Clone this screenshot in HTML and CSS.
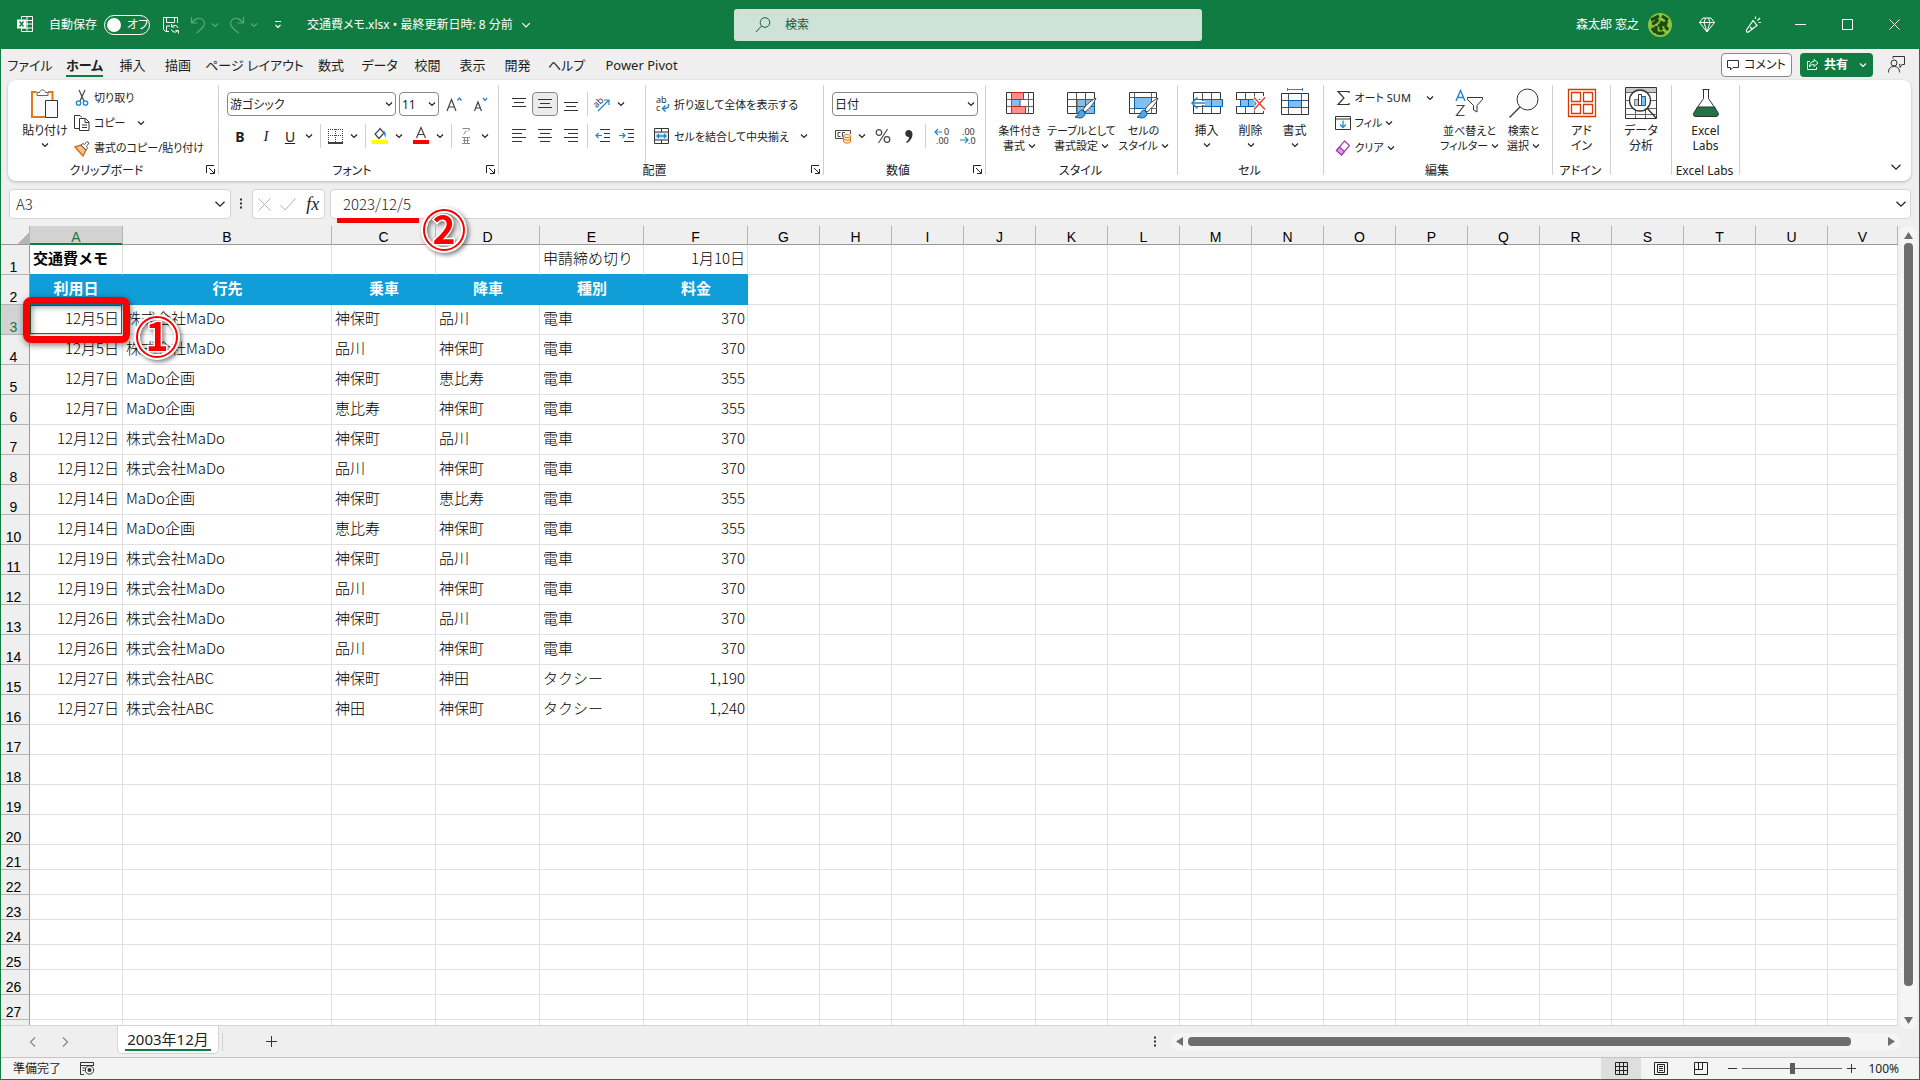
FILE: index.html
```html
<!DOCTYPE html>
<html lang="ja">
  <head>
    <meta charset="UTF-8" />
    <meta name="viewport" content="width=device-width, initial-scale=1.0" />
    <title>交通費メモ.xlsx - Excel</title>
    <link rel="stylesheet" href="styles.css">
  </head>
  <body>
    <svg class="sprite" aria-hidden="true">
      <symbol id="chev" viewBox="0 0 8 8"><path class="chev-line" d="M1 2.500l3 3 3-3" /></symbol>
      <symbol id="launch" viewBox="0 0 9 9"><path d="M.5 8V.5H8M3 3l5 5M8.500 4v4.500H4" fill="none" stroke="currentColor" /></symbol>
      <symbol id="brush" viewBox="0 0 22 22"><path d="M21 1C15 4 10 9 8 13l2 2c4-3 9-8 11-14z" fill="#fff" stroke="#444" /><path d="M7 13c-3 0-3 3-4 5l-3 2c5 2 10 1 10-4z" fill="#5ba3dd" stroke="#0063b1" /></symbol>
    </svg>

    <header class="titlebar">
      <svg class="excel-logo" width="16" height="17" viewBox="0 0 16 17"><path d="M4.500 3V.5h11v15h-11V13M10 .5v15M4.500 4.500h11M9 8h6.500M4.500 12h11" fill="none" stroke="#fff" /><path d="M0 3.500h9v9H0z" fill="#fff" /><path d="M2.500 5.500l4 5M6.500 5.500l-4 5" stroke="#107c41" stroke-width="1.400" /></svg>
      <label class="autosave" for="autosave">自動保存</label>
      <label class="toggle"><input type="checkbox" id="autosave" /><span>オフ</span></label>
      <button class="tb-btn" aria-label="保存"><svg width="18" height="18" viewBox="0 0 18 18"><path d="M7 15.500H3.500L1.500 13.500v-12h14V7M4.500 1.500v5h8v-5M4.500 15v-5H8" fill="none" stroke="#fff" /><path d="M16 12a3.500 3.500 0 0 0-6-1.500M9.500 8v3h3M9.500 13.500a3.500 3.500 0 0 0 6 1.500M16.500 17.500v-3h-3" fill="none" stroke="#fff" /></svg></button>
      <button class="tb-btn dim undo" aria-label="元に戻す"><svg width="16" height="18" viewBox="0 0 16 18"><path d="M1.500 1v6h6M1.500 7C6 1.500 11 1 13.500 4.500s1 6-7 12.500" fill="none" stroke="currentColor" stroke-width="1.200" /></svg><svg width="8" height="8"><use href="#chev" /></svg></button>
      <button class="tb-btn dim" aria-label="やり直し"><svg width="16" height="18" viewBox="0 0 16 18"><path d="M14.500 1v6h-6M14.500 7C10 1.500 5 1 2.500 4.500s-1 6 7 12.500" fill="none" stroke="currentColor" stroke-width="1.200" /></svg><svg width="8" height="8"><use href="#chev" /></svg></button>
      <button class="tb-btn custom" aria-label="クイック アクセス"><svg width="8" height="8" viewBox="0 0 8 8"><path d="M1 .5h6M1.500 4L4 6.500 6.500 4" fill="none" stroke="#fff" stroke-width="1.200" /></svg></button>
      <button class="doc-title">交通費メモ.xlsx • 最終更新日時: 8 分前 <svg width="10" height="10"><use href="#chev" /></svg></button>
      <div class="search">
        <svg width="16" height="16" viewBox="0 0 16 16"><circle cx="10" cy="5.500" r="4.800" fill="none" stroke="#185c37" /><path d="M6.500 9L1 15" stroke="#185c37" /></svg>
        <input type="text" placeholder="検索" aria-label="検索" />
      </div>
      <div class="title-right">
        <span class="user">森太郎 窓之</span>
        <svg class="avatar" width="24" height="24" viewBox="0 0 24 24"><circle cx="12" cy="12" r="12" fill="#8cc63f" /><path d="M3 7l8-4M14 3l6 4M4 11c4-1 5-3 6-5M12 9l7 3M19 8c-2 4-6 5-9 4M4 15l3 4M8 13v5c1 3 6 3 8 1M12 14l2 3M17 13l3 4" fill="none" stroke="#1f4a12" stroke-width="3.200" /></svg>
        <button class="tb-win" aria-label="プレミアム"><svg width="16" height="16" viewBox="0 0 16 16"><path d="M4 1h8l3.500 4.500L8 15 .5 5.500zM.5 5.500h15M5 5.500L8 15l3-9.500M5 5.500L6.500 1M11 5.500L9.500 1" fill="none" stroke="#fff" /></svg></button>
        <button class="tb-win" aria-label="ペン"><svg width="17" height="17" viewBox="0 0 17 17"><path d="M8 4.500L1.500 14c-.5 1.500.5 2.500 2 2L12 9.500zM5 11l2.500 2.500M10.500 3V.5M12.500 4.500L15 2M13.500 6.500H16" fill="none" stroke="#fff" stroke-width="1.200" /></svg></button>
        <button class="tb-win" aria-label="最小化"><svg width="11" height="11"><path d="M0 5.500h11" stroke="#fff" /></svg></button>
        <button class="tb-win" aria-label="最大化"><svg width="11" height="11"><path d="M.5 .5h10v10H.5z" fill="none" stroke="#fff" /></svg></button>
        <button class="tb-win" aria-label="閉じる"><svg width="11" height="11"><path d="M.5 .5l10 10M10.500 .5l-10 10" stroke="#fff" /></svg></button>
      </div>
    </header>

    <nav class="tabs">
      <div class="tab-list">
        <a href="#">ファイル</a>
        <a href="#" class="active"><span>ホーム</span></a>
        <a href="#">挿入</a>
        <a href="#">描画</a>
        <a href="#">ページ レイアウト</a>
        <a href="#">数式</a>
        <a href="#">データ</a>
        <a href="#">校閲</a>
        <a href="#">表示</a>
        <a href="#">開発</a>
        <a href="#">ヘルプ</a>
        <a href="#">Power Pivot</a>
      </div>
      <div class="tab-actions">
        <button class="comment"><svg width="12" height="12" viewBox="0 0 12 12"><path d="M.5 1.500h11v7H6L3.500 11V8.500h-3z" fill="none" stroke="#333" /></svg>コメント</button>
        <button class="share"><svg width="13" height="13" viewBox="0 0 13 13"><path d="M4 3.500H1.500v8h9V9M8 1.500l4 3.500-4 3.500V6.500C6 6.500 4.500 7 3.500 9 3.500 6 5 3.500 8 3.500z" fill="none" stroke="#fff" /></svg>共有<svg width="8" height="8"><use href="#chev" /></svg></button>
        <button class="presence" aria-label="ユーザー"><svg width="17" height="17" viewBox="0 0 17 17"><path d="M5 2.500V.5h11.500v8H14l-2 3V8.500h-1" fill="none" stroke="#333" /><circle cx="6" cy="7" r="3" fill="none" stroke="#333" /><path d="M.5 16.500c0-4 2-6 5.500-6s5.500 2 5.500 6" fill="none" stroke="#333" /></svg></button>
      </div>
    </nav>

    <main class="ribbon">
      <section class="group clipboard">
        <div class="group-body">
          <button class="big">
            <span class="pic"><svg width="28" height="30" viewBox="0 0 28 30"><path d="M5.500 4H1v25h13M17 4h4.500v8" fill="none" stroke="#e07b1a" stroke-width="2" /><path d="M3 5h17v8h-6v14H3z" fill="#fafafa" /><path d="M6 7.500V4.500h2.500C9 1 14 1 14.500 4.500H17v3z" fill="#fff" stroke="#666" /><path d="M14.500 12.500h12v17h-12z" fill="#fafafa" stroke="#333" /></svg></span>
            <span>貼り付け</span>
            <svg width="8" height="14"><use href="#chev" /></svg>
          </button>
          <div class="list">
            <button class="item"><svg width="18" height="18" viewBox="0 0 18 18"><path d="M6 1l5 11M12 1L7 12" stroke="#444" stroke-width="1.200" /><circle cx="5.500" cy="14" r="2.200" fill="none" stroke="#1e88d0" stroke-width="1.300" /><circle cx="12.500" cy="14" r="2.200" fill="none" stroke="#1e88d0" stroke-width="1.300" /></svg>切り取り</button>
            <button class="item copy"><svg width="18" height="18" viewBox="0 0 18 18"><path d="M6 14.500H1.500v-13H7l2 2M6.500 4.500h6l3.500 3.500v8.500H6.500zM12 4.500V8.500h4M9 11h5M9 13.500h5" fill="none" stroke="#333" /></svg>コピー<svg width="8" height="8"><use href="#chev" /></svg></button>
            <button class="item"><svg width="18" height="18" viewBox="0 0 18 18"><path d="M2 8l6-2 5 5-3 6z" fill="#f6c08b" stroke="#d8701a" stroke-width="1.400" /><path d="M4 11l4 3" stroke="#d8701a" /><path d="M8 6l2-1.500 1.500 1L14 2.500l2 1.500-2.500 3.500 1 1.500-1.500 2z" fill="#fff" stroke="#555" /></svg>書式のコピー/貼り付け</button>
          </div>
        </div>
        <div class="group-label"><span>クリップボード</span><button class="launcher" aria-label="詳細"><svg width="9" height="9"><use href="#launch" /></svg></button></div>
      </section>

      <section class="group font">
        <div class="group-body rows">
          <div class="row">
            <span class="pick family"><select aria-label="フォント"><option>游ゴシック</option></select><svg width="8" height="8"><use href="#chev" /></svg></span>
            <span class="pick size"><select aria-label="フォント サイズ"><option>11</option></select><svg width="8" height="8"><use href="#chev" /></svg></span>
            <button class="ib" aria-label="拡大"><svg width="17" height="17" viewBox="0 0 17 17"><path d="M1 15L5.500 3.500 10 15M2.800 11h5.500" fill="none" stroke="#444" stroke-width="1.200" /><path d="M11.500 4.500l2-2.500 2 2.500" fill="none" stroke="#1e88d0" stroke-width="1.300" /></svg></button>
            <button class="ib" aria-label="縮小"><svg width="17" height="17" viewBox="0 0 17 17"><path d="M2.500 15L6 6 9.500 15M4 12h4" fill="none" stroke="#444" stroke-width="1.200" /><path d="M11 2l2 2.500L15 2" fill="none" stroke="#1e88d0" stroke-width="1.300" /></svg></button>
          </div>
          <div class="row">
            <button class="ib bold">B</button>
            <button class="ib italic">I</button>
            <button class="ib split underline">U</button><button class="drop" aria-label="下線"><svg width="8" height="8"><use href="#chev" /></svg></button>
            <i class="vsep"></i>
            <button class="ib split" aria-label="罫線"><svg width="15" height="16" viewBox="0 0 15 16"><path d="M.5 1v13M14.500 1v13M7.500 1v13M0 1.500h15M0 7.500h15" stroke="#444" stroke-dasharray="1 1" /><path d="M0 15h15" stroke="#000" stroke-width="1.500" /></svg></button><button class="drop" aria-label="罫線の種類"><svg width="8" height="8"><use href="#chev" /></svg></button>
            <i class="vsep"></i>
            <button class="ib split" aria-label="塗りつぶし"><svg width="16" height="18" viewBox="0 0 16 18"><path d="M7.500 1l4.500 5-5 5.500-4-4.500 5-5" fill="none" stroke="#444" stroke-width="1.200" /><path d="M11 4c3 0 3 3 2.500 7-1-2-1-4-2.500-5" fill="#1e88d0" /><path d="M0 13h16v4H0z" fill="#ff0" /></svg></button><button class="drop" aria-label="塗りつぶしの色"><svg width="8" height="8"><use href="#chev" /></svg></button>
            <button class="ib split gap" aria-label="フォントの色"><svg width="16" height="18" viewBox="0 0 16 18"><path d="M3.500 11L8 .5l4.500 10.500M5 7.500h6" fill="none" stroke="#444" stroke-width="1.200" /><path d="M0 13h16v4H0z" fill="#f00" /></svg></button><button class="drop" aria-label="色"><svg width="8" height="8"><use href="#chev" /></svg></button>
            <i class="vsep"></i>
            <button class="ib split" aria-label="ふりがな"><svg width="10" height="18" viewBox="0 0 10 18"><path d="M1.500 1.500h7c0 1.500-1 2.500-2 3M4.500 3.500c0 2-1 3.500-2 4M1 10.500h8M1 16.500h8M2 13.500h6M3.500 10.500v6M6.500 10.500v6" fill="none" stroke="#888" /></svg></button><button class="drop" aria-label="ふりがなの設定"><svg width="8" height="8"><use href="#chev" /></svg></button>
          </div>
        </div>
        <div class="group-label"><span>フォント</span><button class="launcher" aria-label="詳細"><svg width="9" height="9"><use href="#launch" /></svg></button></div>
      </section>

      <section class="group align">
        <div class="group-body">
          <div class="rows align-left">
            <div class="row">
              <button class="ib" aria-label="上揃え"><svg width="14" height="14"><path d="M0 1.500h14M2 5.500h10M0 9.500h14" stroke="#333" /></svg></button>
              <button class="ib on" aria-label="上下中央揃え"><svg width="14" height="14"><path d="M0 2.500h14M2 6.500h10M0 10.500h14" stroke="#333" /></svg></button>
              <button class="ib" aria-label="下揃え"><svg width="14" height="14"><path d="M0 5.500h14M2 9.500h10M0 13.500h14" stroke="#333" /></svg></button>
              <i class="vsep"></i>
              <button class="ib split" aria-label="方向"><svg width="18" height="16" viewBox="0 0 18 16"><path d="M5 15L15.500 4.500M11 4h5v5" fill="none" stroke="#1e88d0" stroke-width="1.200" /><text x="1" y="10" transform="rotate(-45 5 8)" class="ab">ab</text></svg></button><button class="drop" aria-label="方向の種類"><svg width="8" height="8"><use href="#chev" /></svg></button>
            </div>
            <div class="row">
              <button class="ib" aria-label="左揃え"><svg width="14" height="14"><path d="M0 .5h14M0 4.500h10M0 8.500h14M0 12.500h10" stroke="#333" /></svg></button>
              <button class="ib" aria-label="中央揃え"><svg width="14" height="14"><path d="M0 .5h14M2 4.500h10M0 8.500h14M2 12.500h10" stroke="#333" /></svg></button>
              <button class="ib" aria-label="右揃え"><svg width="14" height="14"><path d="M0 .5h14M4 4.500h10M0 8.500h14M4 12.500h10" stroke="#333" /></svg></button>
              <i class="vsep"></i>
              <button class="ib split" aria-label="インデントを減らす"><svg width="15" height="14"><path d="M5 .5h10M9 4.500h6M9 8.500h6M5 12.500h10" stroke="#333" /><path d="M7 6.500H1M3.500 4L1 6.500 3.500 9" fill="none" stroke="#1e88d0" stroke-width="1.200" /></svg></button>
              <button class="ib" aria-label="インデントを増やす"><svg width="15" height="14"><path d="M5 .5h10M9 4.500h6M9 8.500h6M5 12.500h10" stroke="#333" /><path d="M0 6.500h6M3.500 4L6 6.500 3.500 9" fill="none" stroke="#1e88d0" stroke-width="1.200" /></svg></button>
            </div>
          </div>
          <div class="rows align-right">
            <button class="item"><svg width="18" height="18" viewBox="0 0 18 18"><text x="3" y="8" class="abc">ab</text><text x="3" y="16" class="abc">c</text><path d="M15.500 9v2c0 2-2 2.500-5.500 2.500M12.500 10.500L9.500 13.500l3 3" fill="none" stroke="#1e88d0" stroke-width="1.500" /></svg>折り返して全体を表示する</button>
            <button class="item"><svg width="18" height="16" viewBox="0 0 18 16"><path d="M1.500 4h14v8h-14z" fill="#dcebf7" /><path d="M1.500 .5h14v15h-14zM1.500 4h14M1.500 12h14M8.500 .5V4M8.500 12v3.500" fill="none" stroke="#333" /><path d="M4 8h9M6 6L4 8l2 2M11 6l2 2-2 2" fill="none" stroke="#1e88d0" stroke-width="1.300" /></svg>セルを結合して中央揃え<svg width="8" height="8"><use href="#chev" /></svg></button>
          </div>
        </div>
        <div class="group-label"><span>配置</span><button class="launcher" aria-label="詳細"><svg width="9" height="9"><use href="#launch" /></svg></button></div>
      </section>

      <section class="group number">
        <div class="group-body rows">
          <div class="row"><span class="pick format"><select aria-label="表示形式"><option>日付</option></select><svg width="8" height="8"><use href="#chev" /></svg></span></div>
          <div class="row">
            <button class="ib split" aria-label="通貨"><svg width="17" height="15" viewBox="0 0 17 15"><path d="M8 9.500H.5v-8h15V5M5.500 3.500H3v4h2.500M10 3.500H7.500v4H8" fill="none" stroke="#444" /><path d="M8.500 7v6c1 1.500 6 1.500 7 0V7" fill="#fbe3cd" stroke="#e07b1a" /><ellipse cx="12" cy="7" rx="3.500" ry="1.500" fill="#fff" stroke="#e07b1a" /><path d="M8.500 10c1 1.500 6 1.500 7 0" fill="none" stroke="#e07b1a" /></svg></button><button class="drop" aria-label="通貨の種類"><svg width="8" height="8"><use href="#chev" /></svg></button>
            <button class="ib" aria-label="パーセント"><svg width="16" height="16" viewBox="0 0 16 16"><circle cx="4" cy="4.500" r="2.800" fill="none" stroke="#444" stroke-width="1.200" /><circle cx="12" cy="11.500" r="2.800" fill="none" stroke="#444" stroke-width="1.200" /><path d="M12.500 1L3.500 15" stroke="#444" stroke-width="1.100" /></svg></button>
            <button class="ib" aria-label="桁区切り"><svg width="8" height="13" viewBox="0 0 8 13"><path d="M4 0c5 0 5 9-2 13l-1-1c2-1.500 3-3 3-5C-1 7-1 0 4 0z" fill="#333" /></svg></button>
            <i class="vsep"></i>
            <button class="ib" aria-label="小数点以下を増やす"><svg width="17" height="16" viewBox="0 0 17 16"><path d="M8 4H1M4 1L1 4l3 3" fill="none" stroke="#1e88d0" stroke-width="1.200" /><text x="10" y="7" class="dec">0</text><text x="2" y="16" class="dec">.00</text></svg></button>
            <button class="ib" aria-label="小数点以下を減らす"><svg width="17" height="16" viewBox="0 0 17 16"><path d="M0 12h8M5 9l3 3-3 3" fill="none" stroke="#1e88d0" stroke-width="1.200" /><text x="2" y="7" class="dec">.00</text><text x="8" y="16" class="dec">.0</text></svg></button>
          </div>
        </div>
        <div class="group-label"><span>数値</span><button class="launcher" aria-label="詳細"><svg width="9" height="9"><use href="#launch" /></svg></button></div>
      </section>

      <section class="group styles">
        <div class="group-body">
          <button class="big">
            <span class="pic"><svg width="28" height="22" viewBox="0 0 28 22"><path d="M.5 .5h27v21H.5z" fill="#fff" stroke="#333" /><path d="M.5 7.500h27M.5 14.500h27M5.500 .5v21M22.500 .5v21" stroke="#666" /><path d="M5.500 .5h12v7h-12zM5.500 14.500h14v7h-14z" fill="#ff8f8f" stroke="#d8201a" /><path d="M6 8h8v6H6z" fill="#83beec" /><path d="M14 7v8" stroke="#0063b1" /></svg></span>
            <span>条件付き<br />書式 <svg width="8" height="8"><use href="#chev" /></svg></span>
          </button>
          <button class="big">
            <span class="pic"><svg width="30" height="28" viewBox="0 0 30 28"><path d="M.5 3.500h27v21H.5z" fill="#fff" stroke="#333" /><path d="M10 10.500h17.500v14H10z" fill="#83beec" stroke="#0063b1" /><path d="M.5 10.500h27M.5 17.500h27M9.500 3.500v21M18.500 3.500v21" stroke="#555" /><use href="#brush" x="8" y="8" width="22" height="22" /></svg></span>
            <span>テーブルとして<br />書式設定 <svg width="8" height="8"><use href="#chev" /></svg></span>
          </button>
          <button class="big">
            <span class="pic"><svg width="30" height="28" viewBox="0 0 30 28"><path d="M.5 3.500h27v21H.5z" fill="#fff" stroke="#333" /><path d="M.5 8.500h27M.5 19.500h27M5.500 3.500v21M22.500 3.500v21" stroke="#666" /><path d="M5.500 8.500h17v11h-17z" fill="#83beec" stroke="#0063b1" /><use href="#brush" x="8" y="8" width="22" height="22" /></svg></span>
            <span>セルの<br />スタイル <svg width="8" height="8"><use href="#chev" /></svg></span>
          </button>
        </div>
        <div class="group-label"><span>スタイル</span></div>
      </section>

      <section class="group cells">
        <div class="group-body">
          <button class="big">
            <span class="pic"><svg width="32" height="28" viewBox="0 0 32 28"><path d="M2.500 3.500h27v21h-27z" fill="#fff" stroke="#333" /><path d="M11.500 3.500v21M20.500 3.500v21M2.500 10.500h27M2.500 17.500h27" stroke="#555" /><path d="M12 10.500h19.500v7H12zM20.500 10.500v7" fill="#83beec" stroke="#0063b1" /><path d="M0 12h14v4H0z" fill="#fff" /><path d="M14 14H1M6.500 8.500L1 14l5.500 5.500" fill="none" stroke="#1e88d0" stroke-width="1.500" /></svg></span>
            <span>挿入</span><svg width="8" height="14"><use href="#chev" /></svg>
          </button>
          <button class="big">
            <span class="pic"><svg width="30" height="28" viewBox="0 0 30 28"><path d="M.5 3.500h27v21H.5z" fill="#fff" stroke="#333" /><path d="M9.500 3.500v21M18.500 3.500v21M.5 10.500h27M.5 17.500h27" stroke="#555" /><path d="M0 11h4v6H0zM24 11h4v6h-4z" fill="#fff" /><path d="M4.500 10.500H20v7H4.500zM12.500 10.500v7" fill="#83beec" stroke="#0063b1" /><path d="M18 8l11 13M29 8L18 21" stroke="#fff" stroke-width="4" /><path d="M18 8.500l11 12M29 8.500l-11 12" stroke="#e8403a" stroke-width="1.500" /></svg></span>
            <span>削除</span><svg width="8" height="14"><use href="#chev" /></svg>
          </button>
          <button class="big">
            <span class="pic"><svg width="28" height="30" viewBox="0 0 28 30"><path d="M6.500 1.500h15M6.500 0v3M21.500 0v3" stroke="#1e88d0" /><path d="M.5 5.500h27v21H.5z" fill="#fff" stroke="#333" /><path d="M7.500 5.500v21M20.500 5.500v21M.5 12.500h27M.5 19.500h27" stroke="#555" /><path d="M7.500 12.500h13v7h-13z" fill="#83beec" stroke="#0063b1" /></svg></span>
            <span>書式</span><svg width="8" height="14"><use href="#chev" /></svg>
          </button>
        </div>
        <div class="group-label"><span>セル</span></div>
      </section>

      <section class="group edit">
        <div class="group-body">
          <div class="list">
            <button class="item sum"><svg width="18" height="16" viewBox="0 0 18 16"><path d="M15 3V1.500H4L10 8 4 14.500h11V13" fill="none" stroke="#333" stroke-width="1.200" /></svg>オート SUM<svg width="8" height="8"><use href="#chev" /></svg></button>
            <button class="item"><svg width="18" height="16" viewBox="0 0 18 16"><path d="M1.500 1.500h15v13h-15zM1.500 4h15" fill="none" stroke="#333" /><path d="M9 5.500v7M6 9.500l3 3 3-3" fill="none" stroke="#1e88d0" stroke-width="1.300" /></svg>フィル<svg width="8" height="8"><use href="#chev" /></svg></button>
            <button class="item"><svg width="18" height="16" viewBox="0 0 18 16"><path d="M10.500 1l5 4.500-8 9.500-5-4.500z" fill="#fff" stroke="#a33ab0" stroke-width="1.200" /><path d="M5.500 7l5 4.500-3 3.500-5-4.500z" fill="#d9a0e0" stroke="#a33ab0" stroke-width="1.200" /></svg>クリア<svg width="8" height="8"><use href="#chev" /></svg></button>
          </div>
          <button class="big sort">
            <span class="pic"><svg width="29" height="28" viewBox="0 0 29 28"><path d="M1 12L5.500 1.500 10 12M2.500 8.500h6" fill="none" stroke="#1e88d0" stroke-width="1.400" /><path d="M1.500 16.500h7.500L1.500 26.500H9.500" fill="none" stroke="#444" stroke-width="1.200" /><path d="M12.500 8.500h15v2L22 16.500v6.500l-3.500-2v-4.500l-6-6z" fill="#fafafa" stroke="#333" /></svg></span>
            <span>並べ替えと<br />フィルター <svg width="8" height="8"><use href="#chev" /></svg></span>
          </button>
          <button class="big find">
            <span class="pic"><svg width="30" height="30" viewBox="0 0 30 30"><circle cx="18.500" cy="11.500" r="10.500" fill="#fafafa" stroke="#333" /><path d="M11 19L.5 29.500" stroke="#333" stroke-width="1.200" /></svg></span>
            <span>検索と<br />選択 <svg width="8" height="8"><use href="#chev" /></svg></span>
          </button>
        </div>
        <div class="group-label"><span>編集</span></div>
      </section>

      <section class="group addin">
        <div class="group-body">
          <button class="big">
            <span class="pic"><svg width="28" height="28" viewBox="0 0 28 28"><path d="M.5 .5h27v27H.5zM3.500 3.500h9v9h-9zM15.500 3.500h9v9h-9zM3.500 15.500h9v9h-9zM15.500 15.500h9v9h-9z" fill="none" stroke="#d83b01" stroke-width="1.300" /></svg></span>
            <span>アド<br />イン</span>
          </button>
        </div>
        <div class="group-label"><span>アドイン</span></div>
      </section>

      <section class="group analyze">
        <div class="group-body">
          <button class="big">
            <span class="pic"><svg width="32" height="32" viewBox="0 0 32 32"><path d="M.5 .5h31v31H.5z" fill="#fafafa" stroke="#333" /><path d="M1 1h30v4H1z" fill="#c8c8c8" /><path d="M.5 5.500h31M.5 13.500h31M.5 21.500h31M.5 27.500h31M10.500 21v10M20.500 21v10" stroke="#666" /><circle cx="15" cy="13.500" r="10.500" fill="#fff" stroke="#333" stroke-width="1.300" /><path d="M9.500 12.500h4v6h-4z" fill="#c8c8c8" stroke="#777" /><path d="M13.500 7.500h3v11h-3z" fill="#fff" stroke="#333" /><path d="M16.500 9.500h4v9h-4z" fill="#83beec" stroke="#0063b1" /><path d="M22 21l9 10" stroke="#333" stroke-width="1.300" /></svg></span>
            <span>データ<br />分析</span>
          </button>
        </div>
        <div class="group-label"></div>
      </section>

      <section class="group labs">
        <div class="group-body">
          <button class="big">
            <span class="pic"><svg width="26" height="28" viewBox="0 0 26 28"><path d="M9.500 .5h7M10.500 .5v9L4 19h18L15.500 9.500v-9" fill="#fff" stroke="#333" /><path d="M4.500 18h17l4 6.500c0 2-1 3-2.500 3H3c-2 0-3-1-2.500-3z" fill="#217346" stroke="#333" /></svg></span>
            <span>Excel<br />Labs</span>
          </button>
        </div>
        <div class="group-label"><span>Excel Labs</span></div>
      </section>

      <button class="collapse" aria-label="リボンを折りたたむ"><svg width="12" height="12"><use href="#chev" /></svg></button>
    </main>

    <div class="formula-bar">
      <div class="name-box"><input type="text" value="A3" aria-label="名前ボックス" /><svg width="12" height="12"><use href="#chev" /></svg></div>
      <svg class="dots" width="3" height="12"><path d="M0 1.500h2M0 5.500h2M0 9.500h2" stroke="#333" stroke-width="2" /></svg>
      <div class="fx-box">
        <button aria-label="キャンセル"><svg width="13" height="13"><path d="M.5 .5l12 12M12.500 .5l-12 12" stroke="#b5b5b5" /></svg></button>
        <button aria-label="入力"><svg width="16" height="13"><path d="M.5 7l4.500 5L15.500 .5" fill="none" stroke="#b5b5b5" /></svg></button>
        <button class="fx">fx</button>
      </div>
      <div class="formula">
        <input type="text" value="2023/12/5" aria-label="数式バー" />
        <svg width="12" height="12"><use href="#chev" /></svg>
        <i class="red-line"></i>
        <svg class="badge badge-two" width="56" height="56" viewBox="0 0 56 56"><circle cx="26" cy="26" r="20" class="halo" /><circle cx="26" cy="26" r="20" class="ring" /><text x="26" y="40">2</text></svg>
      </div>
    </div>

    <div class="workspace">
      <div class="sheet">
        <table>
          <colgroup id="cols"></colgroup>
          <thead><tr id="letters"></tr></thead>
          <tbody id="cells"></tbody>
        </table>
      </div>
      <div class="vscroll">
        <svg width="9" height="8"><path d="M4.500 0L9 7H0z" fill="#6e6e6e" /></svg>
        <div class="vthumb"></div>
        <svg width="9" height="8"><path d="M4.500 7L9 0H0z" fill="#6e6e6e" /></svg>
      </div>
    </div>

    <div class="sheet-bar">
      <button class="nav" aria-label="前のシート"><svg width="7" height="10"><path d="M6 .5L1.500 5 6 9.500" fill="none" stroke="#888" stroke-width="1.200" /></svg></button>
      <button class="nav" aria-label="次のシート"><svg width="7" height="10"><path d="M1 .5L5.500 5 1 9.500" fill="none" stroke="#888" stroke-width="1.200" /></svg></button>
      <button class="sheet-tab"><span>2003年12月</span></button>
      <i class="tab-sep"></i>
      <button class="add" aria-label="新しいシート"><svg width="11" height="11"><path d="M0 5.500h11M5.500 0v11" stroke="#333" /></svg></button>
      <svg class="dots push" width="3" height="12"><path d="M0 1.500h2M0 5.500h2M0 9.500h2" stroke="#333" stroke-width="2" /></svg>
      <div class="hscroll">
        <svg width="7" height="9"><path d="M0 4.500L7 0v9z" fill="#6e6e6e" /></svg>
        <div class="hthumb"></div>
        <svg width="7" height="9"><path d="M7 4.500L0 0v9z" fill="#6e6e6e" /></svg>
      </div>
    </div>

    <footer class="status">
      <span class="ready">準備完了</span>
      <svg width="15" height="13" viewBox="0 0 15 13"><path d="M4 12.500H.5V.5h13V4M.5 3.500h13M2.500 6h3M2.500 8.500h2" fill="none" stroke="#333" /><circle cx="9.500" cy="8" r="4.200" fill="none" stroke="#333" /><circle cx="9.500" cy="8" r="2" fill="#333" /></svg>
      <div class="views">
        <button class="view on" aria-label="標準"><svg width="13" height="13"><path d="M.5 .5h12v12H.5zM4.500 .5v12M8.500 .5v12M.5 4.500h12M.5 8.500h12" fill="none" stroke="#222" /></svg></button>
        <button class="view" aria-label="ページ レイアウト"><svg width="14" height="13"><path d="M.5 .5h13v12H.5zM3.500 2.500h7v8h-7zM5 4.500h4M5 6.500h4M5 8.500h4" fill="none" stroke="#222" /></svg></button>
        <button class="view" aria-label="改ページ プレビュー"><svg width="14" height="13"><path d="M.5 .5h13v12H.5zM4.500 .5v7M8.500 .5v7M.5 7.500h8" fill="none" stroke="#222" /></svg></button>
      </div>
      <button class="zoom-btn" aria-label="縮小"><svg width="9" height="9"><path d="M0 4.500h9" stroke="#333" /></svg></button>
      <input class="zoom" type="range" min="0" max="100" value="50" aria-label="ズーム" />
      <button class="zoom-btn" aria-label="拡大"><svg width="9" height="9"><path d="M0 4.500h9M4.500 0v9" stroke="#333" /></svg></button>
      <span class="percent">100%</span>
    </footer>

    <script>
      const letters = "ABCDEFGHIJKLMNOPQRSTUV".split("");
      const rows = [
        ["交通費メモ", "", "", "", "申請締め切り", "1月10日"],
        ["利用日", "行先", "乗車", "降車", "種別", "料金"],
        ["12月5日", "株式会社MaDo", "神保町", "品川", "電車", "370"],
        ["12月5日", "株式会社MaDo", "品川", "神保町", "電車", "370"],
        ["12月7日", "MaDo企画", "神保町", "恵比寿", "電車", "355"],
        ["12月7日", "MaDo企画", "恵比寿", "神保町", "電車", "355"],
        ["12月12日", "株式会社MaDo", "神保町", "品川", "電車", "370"],
        ["12月12日", "株式会社MaDo", "品川", "神保町", "電車", "370"],
        ["12月14日", "MaDo企画", "神保町", "恵比寿", "電車", "355"],
        ["12月14日", "MaDo企画", "恵比寿", "神保町", "電車", "355"],
        ["12月19日", "株式会社MaDo", "神保町", "品川", "電車", "370"],
        ["12月19日", "株式会社MaDo", "品川", "神保町", "電車", "370"],
        ["12月26日", "株式会社MaDo", "神保町", "品川", "電車", "370"],
        ["12月26日", "株式会社MaDo", "品川", "神保町", "電車", "370"],
        ["12月27日", "株式会社ABC", "神保町", "神田", "タクシー", "1,190"],
        ["12月27日", "株式会社ABC", "神田", "神保町", "タクシー", "1,240"],
      ];
      const marker = `<i class="red-box"></i><svg class="badge badge-one" width="56" height="56" viewBox="0 0 56 56"><circle cx="26" cy="26" r="20" class="halo" /><circle cx="26" cy="26" r="20" class="ring" /><text x="26" y="40">1</text></svg>`;

      let cols = '<col class="col-head">';
      let heads = '<th class="corner"></th>';
      letters.forEach((letter) => {
        cols += `<col class="col-${letter.toLowerCase()}">`;
        heads += `<th${letter === "A" ? ' class="sel"' : ""}>${letter}</th>`;
      });
      document.getElementById("cols").innerHTML = cols;
      document.getElementById("letters").innerHTML = heads;

      let html = "";
      for (let r = 1; r <= 28; r++) {
        const data = rows[r - 1] || [];
        html += `<tr class="${r > 20 ? "low" : ""} r${r}"><th${r === 3 ? ' class="sel"' : ""}>${r < 28 ? r : ""}</th>`;
        letters.forEach((letter, c) => {
          const active = r === 3 && c === 0;
          html += `<td${active ? ' class="active-cell"' : ""}>${data[c] || ""}${active ? marker : ""}</td>`;
        });
        html += "</tr>";
      }
      document.getElementById("cells").innerHTML = html;
    </script>
  </body>
</html>
```
FILE: styles.css
```css
* {
  box-sizing: border-box;
}

body {
  margin: 0;
  height: 100vh;
  display: flex;
  flex-direction: column;
  overflow: hidden;
  background: #efefef;
  border: 1px solid #107c41;
  border-top: none;
  color: #222;
  font-family: "Noto Sans", "Noto Sans CJK JP", sans-serif;
  font-size: 12px;
  line-height: 15px;
  font-feature-settings: "palt";
}

button,
input,
select {
  font: inherit;
  font-feature-settings: inherit;
  color: inherit;
  background: none;
  border: none;
  padding: 0;
  margin: 0;
}

button {
  display: flex;
  align-items: center;
  justify-content: center;
  white-space: nowrap;
}

input:focus {
  outline: none;
}

svg {
  flex: none;
  overflow: visible;
}

.sprite {
  position: absolute;
  width: 0;
  height: 0;
}

.chev-line {
  fill: none;
  stroke: currentColor;
  stroke-width: 1.2px;
  vector-effect: non-scaling-stroke;
}

/* title bar */
.titlebar {
  flex: none;
  height: 49px;
  display: flex;
  align-items: center;
  background: #107c41;
  color: #fff;
  padding-left: 16px;
}

.autosave {
  width: 48px;
  margin-left: 16px;
}

.toggle {
  display: flex;
  align-items: center;
  gap: 6px;
  width: 46px;
  height: 20px;
  margin: 0 12px 0 7px;
  padding-left: 2px;
  border: 1px solid #fff;
  border-radius: 10px;
}

.toggle input {
  appearance: none;
  width: 14px;
  height: 14px;
  border-radius: 7px;
  background: #fff;
}

.tb-btn {
  gap: 5px;
  margin-right: 10px;
}

.dim {
  color: #5ba67d;
}

.custom {
  width: 20px;
}

.doc-title {
  justify-content: flex-start;
  gap: 8px;
  width: 238px;
  margin-left: 9px;
}

.search {
  flex: 0 1 468px;
  display: flex;
  align-items: center;
  gap: 14px;
  height: 32px;
  margin-left: 189px;
  padding: 0 21px;
  background: #cfe2d7;
  border-radius: 3px;
  color: #185c37;
}

.search input {
  flex: 1;
}

.search input::placeholder {
  color: #185c37;
  opacity: 1;
}

.title-right {
  display: flex;
  align-items: center;
  margin-left: auto;
  padding-right: 1px;
}

.avatar {
  margin: 0 11px 0 9px;
}

.tb-win {
  width: 47px;
  height: 49px;
}

/* ribbon tabs */
.tabs {
  flex: none;
  height: 31px;
  display: flex;
  justify-content: space-between;
  font-size: 13px;
  line-height: 20px;
}

.tab-list {
  display: grid;
  grid-template-columns: 58px 51px 45px 46px 107px 46px 51px 45px 45px 45px 53px 97px;
}

.tab-list a {
  display: flex;
  align-items: center;
  justify-content: center;
  color: #222;
  text-decoration: none;
  white-space: nowrap;
}

.tab-list .active {
  font-weight: bold;
}

.tab-list .active span {
  border-bottom: 2px solid #107c41;
  height: 24px;
  padding-top: 2px;
}

.tab-actions {
  display: flex;
  align-items: center;
  gap: 8px;
  padding-right: 7px;
  font-size: 12px;
}

.comment,
.share {
  height: 24px;
  border-radius: 4px;
  gap: 5px;
}

.comment {
  width: 71px;
  background: #fff;
  border: 1px solid #888;
}

.share {
  width: 73px;
  background: #107c41;
  color: #fff;
  font-weight: bold;
}

.share svg:last-child {
  margin-left: 6px;
}

.presence {
  width: 31px;
}

/* ribbon */
.ribbon {
  flex: none;
  display: flex;
  height: 101px;
  margin: 0 8px 0 7px;
  padding: 5px 0 6px;
  background: #fff;
  border-radius: 8px;
  box-shadow: 0 1px 3px rgba(0, 0, 0, 0.25);
}

.group {
  flex: none;
  display: flex;
  flex-direction: column;
  border-right: 1px solid #d0d0d0;
}

.clipboard {
  width: 211px;
}

.font {
  width: 280px;
}

.align {
  width: 325px;
}

.number {
  width: 162px;
}

.styles {
  width: 192px;
}

.cells {
  width: 146px;
}

.edit {
  width: 229px;
}

.addin {
  width: 58px;
}

.analyze {
  width: 61px;
}

.labs {
  width: 68px;
}

.group-body {
  flex: 1;
  display: flex;
  justify-content: center;
}

.group-label {
  display: flex;
  height: 12px;
  padding-right: 2px;
  text-align: center;
}

.group-label span {
  flex: 1;
  white-space: nowrap;
}

.launcher {
  width: 11px;
}

.group-body.rows,
.rows {
  display: flex;
  flex-direction: column;
  justify-content: flex-start;
  gap: 8px;
  padding: 7px 0 0 8px;
}

.row {
  display: flex;
  align-items: center;
  height: 24px;
}

.big {
  flex-direction: column;
  justify-content: flex-start;
  padding-top: 3px;
}

.pic {
  display: flex;
  align-items: center;
  height: 30px;
  margin-bottom: 5px;
}

.list {
  display: flex;
  flex-direction: column;
  align-items: flex-start;
}

.item {
  justify-content: flex-start;
  gap: 3px;
  height: 24px;
  font-size: 11px;
}

.list .item {
  height: 25px;
}

.copy svg:last-child {
  margin-left: 8px;
}

.sum svg:last-child {
  margin-left: 12px;
}

.clipboard .big {
  width: 50px;
}

.clipboard .group-body {
  justify-content: flex-start;
  padding-left: 12px;
}

.clipboard .list {
  padding-left: 3px;
}

.styles .big {
  width: 62px;
  font-size: 11px;
}

.cells .big {
  width: 44px;
}

.edit .group-body {
  padding-left: 5px;
}

.edit .list {
  width: 106px;
}

.edit .big {
  font-size: 11px;
}

.sort {
  width: 60px;
}

.find {
  width: 48px;
}

.ib {
  width: 26px;
  height: 24px;
}

.ib.split {
  width: 22px;
}

.ib.gap {
  margin-left: 3px;
}

.ib.on {
  background: #ebebeb;
  border: 1px solid #888;
  border-radius: 4px;
}

.drop {
  width: 16px;
  height: 24px;
}

.bold {
  font-size: 14px;
  font-weight: bold;
}

.italic {
  font-family: "Liberation Serif", serif;
  font-size: 15px;
  font-style: italic;
}

.underline {
  font-size: 14px;
  text-decoration: underline;
}

.vsep {
  width: 1px;
  height: 24px;
  margin: 0 3px;
  background: #d0d0d0;
}

.pick {
  display: grid;
  grid-template-columns: 1fr 14px;
  align-items: center;
  height: 24px;
  border: 1px solid #888;
  border-radius: 4px;
}

.pick select {
  grid-area: 1 / 1 / 2 / 3;
  appearance: none;
  height: 22px;
  padding-left: 2px;
}

.pick svg {
  grid-area: 1 / 2 / 2 / 3;
  justify-self: end;
  margin-right: 2px;
  pointer-events: none;
}

.family {
  width: 169px;
  margin-right: 3px;
}

.size {
  width: 40px;
  margin-right: 2px;
}

.format {
  width: 146px;
}

.align .group-body {
  justify-content: flex-start;
}

.align-left {
  width: 146px;
  padding-left: 7px;
}

.align-right {
  padding-left: 7px;
  border-left: 1px solid #d0d0d0;
}

.align-right .item svg:last-child:not(:first-child) {
  margin-left: 8px;
}

.ab,
.abc,
.dec {
  font-size: 9px;
  fill: #333;
}

.collapse {
  align-self: flex-end;
  width: 30px;
  height: 16px;
  margin-left: auto;
}

/* formula bar */
.formula-bar {
  flex: none;
  display: flex;
  align-items: center;
  height: 30px;
  margin: 8px 8px 0;
  font-family: "Noto Sans CJK JP", sans-serif;
  font-size: 15px;
  font-weight: 300;
  line-height: 20px;
}

.name-box,
.fx-box,
.formula {
  display: flex;
  align-items: center;
  height: 30px;
  background: #fff;
  border: 1px solid #d4d4d4;
  border-radius: 4px;
}

.name-box {
  width: 222px;
  padding: 0 4px 0 6px;
}

.name-box input,
.formula input {
  flex: 1;
  min-width: 0;
}

.dots {
  margin: 0 9px;
}

.fx-box {
  width: 73px;
  margin-right: 5px;
  justify-content: space-around;
}

.fx {
  font-family: "Liberation Serif", serif;
  font-size: 18px;
  font-style: italic;
}

.formula {
  flex: 1;
  position: relative;
  padding: 0 3px 0 12px;
}

/* grid */
.workspace {
  flex: 1;
  min-height: 0;
  display: flex;
  gap: 2px;
  padding: 7px 2px 0 0;
}

.sheet {
  flex: 1;
  overflow: hidden;
  border-bottom: 1px solid #d4d4d4;
}

table {
  width: 100%;
  table-layout: fixed;
  border-spacing: 0;
  font-family: "Noto Sans CJK JP", sans-serif;
  font-size: 15px;
  font-weight: 300;
  line-height: 20px;
  font-feature-settings: normal;
}

col {
  width: 72px;
}

.col-head {
  width: 29px;
}

.col-a {
  width: 93px;
}

.col-b {
  width: 209px;
}

.col-c,
.col-d,
.col-e,
.col-f {
  width: 104px;
}

.col-v {
  width: auto;
}

th {
  padding: 0;
  font-family: "Liberation Sans", sans-serif;
  font-size: 14px;
  font-weight: normal;
  line-height: 14px;
  color: #000;
  vertical-align: bottom;
  border-right: 1px solid #b4b4b4;
  border-bottom: 1px solid #999;
}

tbody th {
  padding-right: 3px;
  border-right-color: #999;
  border-bottom-color: #b4b4b4;
}

thead tr {
  height: 19px;
}

tbody tr {
  height: 30px;
}

tbody .low {
  height: 25px;
}

th.sel {
  background: #d2d2d2;
  color: #107c41;
}

thead .sel {
  box-shadow: inset 0 -1px #107c41;
  border-bottom-color: #107c41;
}

.corner {
  background: linear-gradient(135deg, transparent 75%, #b4b4b4 75%);
}

td {
  padding: 0 2px 3px 3px;
  background: #fff;
  border-right: 1px solid #e0e0e0;
  border-bottom: 1px solid #e0e0e0;
  color: #000;
  white-space: nowrap;
}

td:nth-child(2) {
  padding-right: 3px;
  text-align: right;
}

td:nth-child(7) {
  text-align: right;
}

.r1 td:nth-child(2) {
  text-align: left;
  font-weight: bold;
}

.r1 td:nth-child(-n + 7) {
  border-bottom-color: #109ed8;
}

.r2 td:nth-child(-n + 7) {
  background: #109ed8;
  border-color: #109ed8;
  color: #fff;
  font-weight: bold;
  text-align: center;
}

.active-cell {
  position: relative;
  box-shadow: inset 0 0 0 1px #107c41;
}

/* scroll bars */
.vscroll {
  display: flex;
  flex-direction: column;
  align-items: center;
  gap: 3px;
  width: 17px;
  margin-bottom: -3px;
  padding: 6px 0 4px;
  background: #f5f5f5;
  border-radius: 8px;
}

.vthumb {
  flex: 1;
  width: 9px;
  margin-bottom: 28px;
  background: #6e6e6e;
  border-radius: 4px;
}

.sheet-bar {
  flex: none;
  display: flex;
  align-items: center;
  height: 32px;
  padding: 0 19px 0 15px;
  border-bottom: 1px solid #c4c4c4;
}

.nav {
  width: 33px;
  height: 20px;
}

.sheet-tab {
  align-self: flex-start;
  width: 102px;
  height: 28px;
  margin-left: 35px;
  background: #fff;
  border: 1px solid #d4d4d4;
  border-top: none;
  border-radius: 0 0 5px 5px;
  font-size: 15px;
  line-height: 20px;
}

.sheet-tab span {
  padding: 0 2px;
  border-bottom: 2px solid #107c41;
}

.tab-sep {
  width: 1px;
  height: 18px;
  margin-left: 3px;
  background: #d0d0d0;
}

.add {
  width: 96px;
  height: 18px;
}

.push {
  margin-left: auto;
  margin-right: 14px;
}

.hscroll {
  flex: 0 1 729px;
  display: flex;
  align-items: center;
  gap: 5px;
  height: 17px;
  padding: 0 5px;
  background: #f5f5f5;
  border-radius: 8px;
}

.hthumb {
  flex: 1;
  height: 9px;
  margin-right: 32px;
  background: #6e6e6e;
  border-radius: 4px;
}

/* status bar */
.status {
  flex: none;
  display: flex;
  align-items: center;
  height: 21px;
  padding: 0 20px 0 12px;
  background: #f4f4f4;
}

.ready {
  width: 67px;
}

.views {
  display: flex;
  margin-left: auto;
  margin-right: 27px;
}

.view {
  width: 40px;
  height: 21px;
}

.views .on {
  background: #dedede;
}

.views + .zoom-btn {
  margin-left: -20px;
}

.zoom-btn {
  width: 9px;
}

.zoom {
  appearance: none;
  width: 100px;
  height: 12px;
  margin: 0 5px;
  background: linear-gradient(#666, #666) center / 100% 1px no-repeat;
}

.zoom::-webkit-slider-thumb {
  appearance: none;
  width: 5px;
  height: 11px;
  background: #5e5e5e;
}

.percent {
  margin-left: 12px;
}

/* red call-outs over the sheet */
.red-box {
  position: absolute;
  z-index: 1;
  left: -7px;
  top: -8px;
  width: 107px;
  height: 46px;
  border: 7px solid #f90000;
  border-radius: 8px;
  box-shadow: 1px 2px 6px rgba(0, 0, 0, 0.5), inset 2px 3px 6px rgba(0, 0, 0, 0.4);
}

.red-line {
  position: absolute;
  left: 6px;
  top: 28px;
  width: 82px;
  height: 5px;
  background: #f90000;
}

.badge {
  position: absolute;
  z-index: 2;
  filter: drop-shadow(2px 2px 2px rgba(0, 0, 0, 0.5));
}

.badge-one {
  left: 101px;
  top: 6px;
}

.badge-two {
  left: 87px;
  top: 14px;
}

.badge .halo {
  fill: none;
  stroke: #fff;
  stroke-width: 6px;
}

.badge .ring {
  fill: none;
  stroke: #f90000;
  stroke-width: 2px;
}

.badge text {
  font-family: "Noto Sans CJK JP", sans-serif;
  font-size: 39px;
  font-weight: bold;
  text-anchor: middle;
  fill: #f90000;
  stroke: #fff;
  stroke-width: 3px;
  paint-order: stroke;
}
```
